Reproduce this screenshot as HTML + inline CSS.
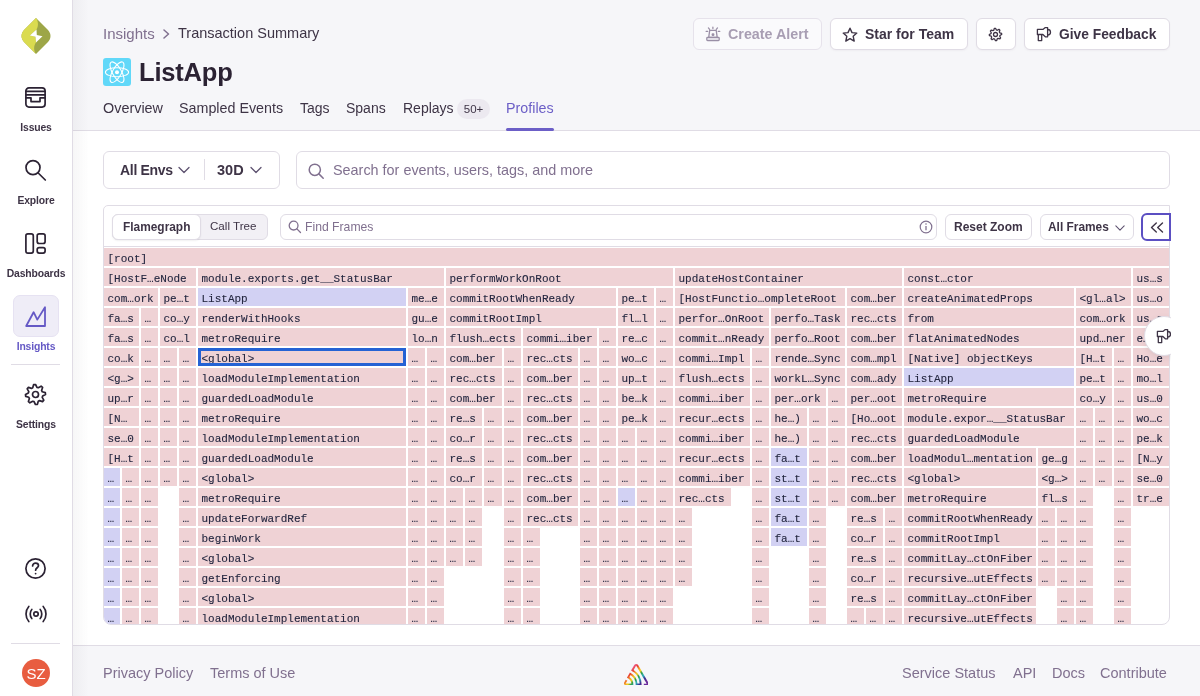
<!DOCTYPE html><html><head><meta charset="utf-8"><style>
*{box-sizing:border-box;margin:0;padding:0}
html,body{width:1200px;height:696px;overflow:hidden;background:#fff;font-family:"Liberation Sans",sans-serif;color:#3E3446}
.a{position:absolute}
.t{position:absolute;white-space:nowrap;line-height:1}
.btn{position:absolute;border:1px solid #E0DCE5;border-radius:6px;background:#fff;box-shadow:0 1px 2px rgba(43,34,51,0.04)}
.fg{position:absolute;font-family:"Liberation Mono",monospace;font-size:11px;line-height:23px;color:#23263F;white-space:nowrap;overflow:hidden;height:18px;padding-left:3.5px;-webkit-text-stroke:0.1px #23263F}
.p{background:#EFD2D5}
.v{background:#D2D1F3}
</style></head><body><div style="position:absolute;left:0;top:0;width:1200px;height:696px;will-change:transform">
<div class="a" style="left:0;top:0;width:73px;height:696px;background:#fff;border-right:1px solid #E0DCE5"></div>
<svg class="a" style="left:21px;top:18px" width="30" height="36" viewBox="0 0 30 36">
<path d="M15 0 L26.5 11.5 C30.5 15.5 30.5 20.5 26.5 24.5 L15 36 L3.5 24.5 C-0.5 20.5 -0.5 15.5 3.5 11.5 Z" fill="#9DA647"/>
<path d="M15 0 C17.5 3 17.5 8.5 15.5 11.5 L8.8 17.5 L14.5 18.8 L15 24.5 C12.5 27.5 12.5 33 15 36 L3.5 24.5 C-0.5 20.5 -0.5 15.5 3.5 11.5 Z" fill="#DADB50"/>
<path d="M15.5 11.5 L8.8 17.5 L14.5 18.8 L15 24.5 L21.5 18.2 L15.8 17 Z" fill="#fff"/>
</svg>
<svg class="a" style="left:25px;top:87px" width="21" height="21" viewBox="0 0 21 21"><rect x="0.9" y="0.9" width="19.2" height="19.2" rx="3" fill="none" stroke="#2B2233" stroke-width="1.7" stroke-linecap="round" stroke-linejoin="round"/>
<path d="M1 4.3 H20 M1 7.8 H20 M1 10.8 H6 V14.6 H15 V10.8 H20" fill="none" stroke="#2B2233" stroke-width="1.7" stroke-linecap="round" stroke-linejoin="round"/></svg>
<svg class="a" style="left:24px;top:159px" width="23" height="23" viewBox="0 0 23 23"><circle cx="9" cy="8.6" r="7" fill="none" stroke="#2B2233" stroke-width="1.7" stroke-linecap="round" stroke-linejoin="round"/><path d="M14.2 14 L21.3 21" fill="none" stroke="#2B2233" stroke-width="1.7" stroke-linecap="round" stroke-linejoin="round"/></svg>
<svg class="a" style="left:25px;top:233px" width="21" height="21" viewBox="0 0 21 21"><rect x="0.9" y="0.9" width="7.4" height="19.2" rx="2" fill="none" stroke="#2B2233" stroke-width="1.7" stroke-linecap="round" stroke-linejoin="round"/><rect x="12.2" y="0.9" width="7.9" height="9.6" rx="2" fill="none" stroke="#2B2233" stroke-width="1.7" stroke-linecap="round" stroke-linejoin="round"/><rect x="12.2" y="14.6" width="7.9" height="5.5" rx="2" fill="none" stroke="#2B2233" stroke-width="1.7" stroke-linecap="round" stroke-linejoin="round"/></svg>
<div class="a" style="left:13px;top:295px;width:46px;height:42px;border-radius:7px;background:#EFEDF7;border:1px solid #E6E2F2"></div>
<svg class="a" style="left:25px;top:306px" width="21" height="21" viewBox="0 0 21 21"><path d="M1.2 20 L8.6 6.2 L12.3 13.6 L20 1.2 V20 Z" fill="none" stroke="#6559C5" stroke-width="1.8" stroke-linejoin="round"/></svg>
<div class="t" style="left:0;width:72px;text-align:center;top:122px;font-size:10.4px;font-weight:bold;letter-spacing:-0.15px;color:#3E3446;line-height:12px">Issues</div>
<div class="t" style="left:0;width:72px;text-align:center;top:195px;font-size:10.4px;font-weight:bold;letter-spacing:-0.15px;color:#3E3446;line-height:12px">Explore</div>
<div class="t" style="left:0;width:72px;text-align:center;top:268px;font-size:10.4px;font-weight:bold;letter-spacing:-0.15px;color:#3E3446;line-height:12px">Dashboards</div>
<div class="t" style="left:0;width:72px;text-align:center;top:341px;font-size:10.4px;font-weight:bold;letter-spacing:-0.15px;color:#6559C5;line-height:12px">Insights</div>
<div class="a" style="left:11px;top:364px;width:49px;height:1px;background:#E0DCE5"></div>
<svg class="a" style="left:24px;top:383px" width="23" height="23" viewBox="0 0 23 23"><path d="M21.31 9.58 L21.50 11.54 L18.65 12.95 L18.23 14.32 L19.79 17.09 L18.55 18.60 L15.53 17.58 L14.27 18.25 L13.42 21.31 L11.46 21.50 L10.05 18.65 L8.68 18.23 L5.91 19.79 L4.40 18.55 L5.42 15.53 L4.75 14.27 L1.69 13.42 L1.50 11.46 L4.35 10.05 L4.77 8.68 L3.21 5.91 L4.45 4.40 L7.47 5.42 L8.73 4.75 L9.58 1.69 L11.54 1.50 L12.95 4.35 L14.32 4.77 L17.09 3.21 L18.60 4.45 L17.58 7.47 L18.25 8.73 Z" fill="none" stroke="#2B2233" stroke-width="1.7" stroke-linecap="round" stroke-linejoin="round" stroke-width="1.6"/><circle cx="11.5" cy="11.5" r="3" fill="none" stroke="#2B2233" stroke-width="1.7" stroke-linecap="round" stroke-linejoin="round" stroke-width="1.6"/></svg>
<div class="t" style="left:0;width:72px;text-align:center;top:419px;font-size:10.4px;font-weight:bold;letter-spacing:-0.15px;color:#3E3446;line-height:12px">Settings</div>
<svg class="a" style="left:24px;top:557px" width="23" height="23" viewBox="0 0 23 23"><circle cx="11.5" cy="11.5" r="9.6" fill="none" stroke="#2B2233" stroke-width="1.7" stroke-linecap="round" stroke-linejoin="round"/><path d="M8.6 9 C8.6 7.2 10 6.2 11.6 6.2 C13.3 6.2 14.5 7.3 14.5 8.8 C14.5 10.6 11.6 11 11.6 13.2" fill="none" stroke="#2B2233" stroke-width="1.7" stroke-linecap="round" stroke-linejoin="round"/><circle cx="11.6" cy="16.6" r="0.9" fill="#2B2233"/></svg>
<svg class="a" style="left:24.5px;top:604px" width="22" height="20" viewBox="0.5 1 22 20"><circle cx="11.5" cy="11" r="2.2" fill="none" stroke="#2B2233" stroke-width="1.7" stroke-linecap="round" stroke-linejoin="round"/><path d="M7.3 6.5 C5.2 8.8 5.2 13.2 7.3 15.5 M15.7 6.5 C17.8 8.8 17.8 13.2 15.7 15.5 M4.3 3.5 C0.6 7.6 0.6 14.4 4.3 18.5 M18.7 3.5 C22.4 7.6 22.4 14.4 18.7 18.5" fill="none" stroke="#2B2233" stroke-width="1.7" stroke-linecap="round" stroke-linejoin="round"/></svg>
<div class="a" style="left:11px;top:643px;width:49px;height:1px;background:#E0DCE5"></div>
<div class="a" style="left:22px;top:659px;width:28px;height:28px;border-radius:50%;background:#E85D40;color:#fff;font-size:15px;line-height:30px;text-align:center">SZ</div>
<div class="a" style="left:73px;top:0;width:16px;height:696px;background:linear-gradient(to right,rgba(43,34,51,0.04),rgba(43,34,51,0));z-index:5"></div>
<div class="a" style="left:73px;top:0;width:1127px;height:131px;background:#F6F6F9;border-bottom:1px solid #E0DCE5"></div>
<div class="t" style="left:103px;top:26px;font-size:15px;color:#80708F">Insights</div>
<svg class="a" style="left:162px;top:29px" width="9" height="12" viewBox="0 0 9 12"><path d="M2 1 L6.5 5 L2 9" fill="none" stroke="#80708F" stroke-width="1.5" stroke-linecap="round" stroke-linejoin="round"/></svg>
<div class="t" style="left:178px;top:26px;font-size:14.5px;color:#3E3446">Transaction Summary</div>
<svg class="a" style="left:103px;top:58px" width="28" height="28" viewBox="0 0 28 28"><rect width="28" height="28" rx="3" fill="#61D8F9"/>
<g fill="none" stroke="#fff" stroke-width="1.05"><ellipse cx="14" cy="14.2" rx="11.6" ry="4.5"/><ellipse cx="14" cy="14.2" rx="11.6" ry="4.5" transform="rotate(60 14 14.2)"/><ellipse cx="14" cy="14.2" rx="11.6" ry="4.5" transform="rotate(120 14 14.2)"/></g><circle cx="14" cy="14.2" r="2" fill="#fff"/></svg>
<div class="t" style="left:139px;top:60px;font-size:25.5px;font-weight:bold;color:#2B2233;letter-spacing:-0.2px">ListApp</div>
<div class="t" style="left:103px;top:101px;font-size:14.4px;color:#3E3446">Overview</div>
<div class="t" style="left:179px;top:101px;font-size:14.3px;color:#3E3446">Sampled Events</div>
<div class="t" style="left:300px;top:101px;font-size:14px;color:#3E3446">Tags</div>
<div class="t" style="left:346px;top:101px;font-size:14px;color:#3E3446">Spans</div>
<div class="t" style="left:403px;top:101px;font-size:14px;color:#3E3446">Replays</div>
<div class="a" style="left:457px;top:99px;width:33px;height:20px;border-radius:10px;background:#ECE9F0;font-size:11.5px;line-height:20px;text-align:center;color:#3E3446">50+</div>
<div class="t" style="left:506px;top:101px;font-size:14.3px;color:#6C5FC7">Profiles</div>
<div class="a" style="left:506px;top:128px;width:48px;height:3px;border-radius:2px;background:#6C5FC7"></div>
<div class="btn" style="left:693px;top:18px;width:129px;height:32px;background:#FAFAFC;box-shadow:none;border-color:#E6E2EB"></div>
<svg class="a" style="left:704px;top:24px" width="18" height="18" viewBox="0 0 18 18"><g fill="none" stroke="#9A8FA6" stroke-width="1.3" stroke-linecap="round" stroke-linejoin="round"><path d="M8.9 3.2 V4.6 M4.4 3.9 L5.6 5.3 M13.5 3.9 L12.3 5.3 M2.1 7.3 H3.7 M14.2 7.3 H15.8"/><path d="M5.7 6.4 H12.2 L13.2 13.3 H4.7 Z"/><rect x="2.8" y="13.5" width="12.4" height="3" rx="0.8"/></g><rect x="7.6" y="9.3" width="2.8" height="2.8" rx="1" fill="#9A8FA6"/></svg>
<div class="t" style="left:728px;top:27px;font-size:14.3px;font-weight:bold;color:#A89EB3">Create Alert</div>
<div class="btn" style="left:830px;top:18px;width:138px;height:32px;"></div>
<svg class="a" style="left:842px;top:26.7px" width="16" height="16" viewBox="0 0 16 16"><path d="M8 1.2 L10 5.6 L14.8 6.1 L11.2 9.3 L12.2 14.1 L8 11.7 L3.8 14.1 L4.8 9.3 L1.2 6.1 L6 5.6 Z" fill="none" stroke="#3E3446" stroke-width="1.4" stroke-linejoin="round"/></svg>
<div class="t" style="left:865px;top:27px;font-size:14px;font-weight:bold;color:#3E3446">Star for Team</div>
<div class="btn" style="left:976px;top:18px;width:40px;height:32px;"></div>
<svg class="a" style="left:988px;top:27px" width="15" height="15" viewBox="0 0 15 15"><path d="M13.59 6.31 L13.70 7.52 L12.01 8.41 L11.74 9.28 L12.64 10.96 L11.87 11.90 L10.04 11.33 L9.24 11.76 L8.69 13.59 L7.48 13.70 L6.59 12.01 L5.72 11.74 L4.04 12.64 L3.10 11.87 L3.67 10.04 L3.24 9.24 L1.41 8.69 L1.30 7.48 L2.99 6.59 L3.26 5.72 L2.36 4.04 L3.13 3.10 L4.96 3.67 L5.76 3.24 L6.31 1.41 L7.52 1.30 L8.41 2.99 L9.28 3.26 L10.96 2.36 L11.90 3.13 L11.33 4.96 L11.76 5.76 Z" fill="none" stroke="#3E3446" stroke-width="1.3" stroke-linejoin="round"/><circle cx="7.5" cy="7.5" r="2" fill="none" stroke="#3E3446" stroke-width="1.3"/></svg>
<div class="btn" style="left:1024px;top:18px;width:146px;height:32px;"></div>
<svg class="a" style="left:1036px;top:26px" width="16" height="16" viewBox="0 0 16 16"><g fill="none" stroke="#3E3446" stroke-width="1.3" stroke-linejoin="round"><path d="M1.4 3.4 H6.9 L9.3 1.6 H11.6 V10.8 H9.3 L6.9 8.5 H1.4 Z"/><path d="M2.3 8.5 V14.6 H5.7 V8.5"/><path d="M11.6 3.5 A2.9 2.8 0 0 1 11.6 9.1"/></g></svg>
<div class="t" style="left:1059px;top:28px;font-size:13.8px;font-weight:bold;color:#3E3446">Give Feedback</div>
<div class="btn" style="left:103px;top:151px;width:177px;height:38px;box-shadow:none"></div>
<div class="t" style="left:120px;top:163px;font-size:14px;font-weight:bold;color:#3E3446;letter-spacing:-0.3px">All Envs</div>
<svg class="a" style="left:178px;top:166px" width="12" height="8" viewBox="0 0 12 8"><path d="M1 1.5 L6 6.5 L11 1.5" fill="none" stroke="#5E5270" stroke-width="1.3" stroke-linecap="round" stroke-linejoin="round"/></svg>
<div class="a" style="left:204px;top:159px;width:1px;height:21px;background:#E0DCE5"></div>
<div class="t" style="left:217px;top:163px;font-size:14.5px;font-weight:bold;color:#3E3446">30D</div>
<svg class="a" style="left:250px;top:166px" width="12" height="8" viewBox="0 0 12 8"><path d="M1 1.5 L6 6.5 L11 1.5" fill="none" stroke="#5E5270" stroke-width="1.3" stroke-linecap="round" stroke-linejoin="round"/></svg>
<div class="btn" style="left:296px;top:151px;width:874px;height:38px;box-shadow:none"></div>
<svg class="a" style="left:308px;top:163px" width="17" height="17" viewBox="0 0 17 17"><circle cx="6.8" cy="6.8" r="5.6" fill="none" stroke="#80708F" stroke-width="1.5"/><path d="M10.9 10.9 L15.2 15.2" stroke="#80708F" stroke-width="1.5" stroke-linecap="round"/></svg>
<div class="t" style="left:333px;top:163px;font-size:14.4px;color:#80708F">Search for events, users, tags, and more</div>
<div class="a" style="left:103px;top:205px;width:1067px;height:420px;border:1px solid #E0DCE5;border-radius:5px 0 8px 8px;background:#fff;overflow:hidden"></div>
<div class="a" style="left:112px;top:214px;width:156px;height:26px;border-radius:6px;background:#F2F0F5;border:1px solid #E0DCE5"></div>
<div class="a" style="left:112px;top:214px;width:89px;height:26px;border-radius:6px;background:#fff;border:1px solid #E0DCE5;box-shadow:0 1px 2px rgba(0,0,0,0.06)"></div>
<div class="t" style="left:123px;top:222px;font-size:11.9px;font-weight:bold;color:#3E3446">Flamegraph</div>
<div class="t" style="left:210px;top:219.5px;font-size:11.6px;color:#3E3446">Call Tree</div>
<div class="btn" style="left:280px;top:214px;width:657px;height:26px;box-shadow:none"></div>
<svg class="a" style="left:288px;top:220px" width="14" height="14" viewBox="0 0 14 14"><circle cx="5.6" cy="5.6" r="4.4" fill="none" stroke="#80708F" stroke-width="1.3"/><path d="M8.9 8.9 L12.5 12.5" stroke="#80708F" stroke-width="1.3" stroke-linecap="round"/></svg>
<div class="t" style="left:305px;top:221px;font-size:12.2px;color:#80708F">Find Frames</div>
<svg class="a" style="left:919px;top:220px" width="14" height="14" viewBox="0 0 14 14"><circle cx="7" cy="7" r="5.8" fill="none" stroke="#80708F" stroke-width="1.2"/><path d="M7 6 V10.3" stroke="#80708F" stroke-width="1.3"/><circle cx="7" cy="4" r="0.8" fill="#80708F"/></svg>
<div class="btn" style="left:945px;top:214px;width:87px;height:26px;box-shadow:none"></div>
<div class="t" style="left:954px;top:221px;font-size:12px;font-weight:bold;color:#3E3446">Reset Zoom</div>
<div class="btn" style="left:1040px;top:214px;width:94px;height:26px;box-shadow:none"></div>
<div class="t" style="left:1048px;top:222px;font-size:11.9px;font-weight:bold;color:#3E3446">All Frames</div>
<svg class="a" style="left:1115px;top:224px" width="10" height="8" viewBox="0 0 12 8"><path d="M1 1.5 L6 6.5 L11 1.5" fill="none" stroke="#5E5270" stroke-width="1.3" stroke-linecap="round" stroke-linejoin="round"/></svg>
<div class="a" style="left:1141px;top:213px;width:30px;height:28px;border-radius:6px 0 0 6px;border:2px solid #5B4FC2;background:#fff;z-index:2"></div>
<svg class="a" style="left:1150px;top:221.5px;z-index:3" width="14" height="11" viewBox="0 0 14 11"><path d="M6.3 1 L1.5 5.5 L6.3 10 M12.5 1 L7.7 5.5 L12.5 10" fill="none" stroke="#3E3446" stroke-width="1.4" stroke-linecap="round" stroke-linejoin="round"/></svg>
<div class="a" style="left:1171px;top:205px;width:29px;height:440px;background:#fff;z-index:4"></div>
<div class="a" style="left:104px;top:246px;width:1066px;height:1px;background:#E0DCE5"></div>
<div class="a" style="left:104px;top:248px;width:1065px;height:376px;overflow:hidden;border-radius:0 0 7px 7px;will-change:transform">
<div class="fg p" style="left:0px;top:0px;width:1065px">[root]</div>
<div class="fg p" style="left:0px;top:20px;width:92px">[HostF…eNode</div>
<div class="fg p" style="left:94px;top:20px;width:246px">module.exports.get__StatusBar</div>
<div class="fg p" style="left:342px;top:20px;width:227px">performWorkOnRoot</div>
<div class="fg p" style="left:571px;top:20px;width:227px">updateHostContainer</div>
<div class="fg p" style="left:800px;top:20px;width:227px">const…ctor</div>
<div class="fg p" style="left:1029px;top:20px;width:36px">us…s</div>
<div class="fg p" style="left:0px;top:40px;width:54px">com…ork</div>
<div class="fg p" style="left:56px;top:40px;width:36px">pe…t</div>
<div class="fg v" style="left:94px;top:40px;width:208px">ListApp</div>
<div class="fg p" style="left:304px;top:40px;width:36px">me…e</div>
<div class="fg p" style="left:342px;top:40px;width:170px">commitRootWhenReady</div>
<div class="fg p" style="left:514px;top:40px;width:36px">pe…t</div>
<div class="fg p" style="left:552px;top:40px;width:17px">…</div>
<div class="fg p" style="left:571px;top:40px;width:170px">[HostFunctio…ompleteRoot</div>
<div class="fg p" style="left:743px;top:40px;width:55px">com…ber</div>
<div class="fg p" style="left:800px;top:40px;width:170px">createAnimatedProps</div>
<div class="fg p" style="left:972px;top:40px;width:55px">&lt;gl…al&gt;</div>
<div class="fg p" style="left:1029px;top:40px;width:36px">us…o</div>
<div class="fg p" style="left:0px;top:60px;width:35px">fa…s</div>
<div class="fg p" style="left:37px;top:60px;width:17px">…</div>
<div class="fg p" style="left:56px;top:60px;width:36px">co…y</div>
<div class="fg p" style="left:94px;top:60px;width:208px">renderWithHooks</div>
<div class="fg p" style="left:304px;top:60px;width:36px">gu…e</div>
<div class="fg p" style="left:342px;top:60px;width:170px">commitRootImpl</div>
<div class="fg p" style="left:514px;top:60px;width:36px">fl…l</div>
<div class="fg p" style="left:552px;top:60px;width:17px">…</div>
<div class="fg p" style="left:571px;top:60px;width:94px">perfor…OnRoot</div>
<div class="fg p" style="left:667px;top:60px;width:74px">perfo…Task</div>
<div class="fg p" style="left:743px;top:60px;width:55px">rec…cts</div>
<div class="fg p" style="left:800px;top:60px;width:170px">from</div>
<div class="fg p" style="left:972px;top:60px;width:55px">com…ork</div>
<div class="fg p" style="left:1029px;top:60px;width:36px">us…o</div>
<div class="fg p" style="left:0px;top:80px;width:35px">fa…s</div>
<div class="fg p" style="left:37px;top:80px;width:17px">…</div>
<div class="fg p" style="left:56px;top:80px;width:36px">co…l</div>
<div class="fg p" style="left:94px;top:80px;width:208px">metroRequire</div>
<div class="fg p" style="left:304px;top:80px;width:36px">lo…n</div>
<div class="fg p" style="left:342px;top:80px;width:75px">flush…ects</div>
<div class="fg p" style="left:419px;top:80px;width:74px">commi…iber</div>
<div class="fg p" style="left:495px;top:80px;width:17px">…</div>
<div class="fg p" style="left:514px;top:80px;width:36px">re…c</div>
<div class="fg p" style="left:552px;top:80px;width:17px">…</div>
<div class="fg p" style="left:571px;top:80px;width:94px">commit…nReady</div>
<div class="fg p" style="left:667px;top:80px;width:74px">perfo…Root</div>
<div class="fg p" style="left:743px;top:80px;width:55px">com…ber</div>
<div class="fg p" style="left:800px;top:80px;width:170px">flatAnimatedNodes</div>
<div class="fg p" style="left:972px;top:80px;width:55px">upd…ner</div>
<div class="fg p" style="left:1029px;top:80px;width:36px">e…s</div>
<div class="fg p" style="left:0px;top:100px;width:35px">co…k</div>
<div class="fg p" style="left:37px;top:100px;width:17px">…</div>
<div class="fg p" style="left:56px;top:100px;width:17px">…</div>
<div class="fg p" style="left:75px;top:100px;width:17px">…</div>
<div class="fg p" style="left:94px;top:100px;width:208px">&lt;global&gt;</div>
<div class="fg p" style="left:304px;top:100px;width:17px">…</div>
<div class="fg p" style="left:323px;top:100px;width:17px">…</div>
<div class="fg p" style="left:342px;top:100px;width:56px">com…ber</div>
<div class="fg p" style="left:400px;top:100px;width:17px">…</div>
<div class="fg p" style="left:419px;top:100px;width:55px">rec…cts</div>
<div class="fg p" style="left:476px;top:100px;width:17px">…</div>
<div class="fg p" style="left:495px;top:100px;width:17px">…</div>
<div class="fg p" style="left:514px;top:100px;width:36px">wo…c</div>
<div class="fg p" style="left:552px;top:100px;width:17px">…</div>
<div class="fg p" style="left:571px;top:100px;width:75px">commi…Impl</div>
<div class="fg p" style="left:648px;top:100px;width:17px">…</div>
<div class="fg p" style="left:667px;top:100px;width:74px">rende…Sync</div>
<div class="fg p" style="left:743px;top:100px;width:55px">com…mpl</div>
<div class="fg p" style="left:800px;top:100px;width:170px">[Native] objectKeys</div>
<div class="fg p" style="left:972px;top:100px;width:36px">[H…t</div>
<div class="fg p" style="left:1010px;top:100px;width:17px">…</div>
<div class="fg p" style="left:1029px;top:100px;width:36px">Ho…e</div>
<div class="fg p" style="left:0px;top:120px;width:35px">&lt;g…&gt;</div>
<div class="fg p" style="left:37px;top:120px;width:17px">…</div>
<div class="fg p" style="left:56px;top:120px;width:17px">…</div>
<div class="fg p" style="left:75px;top:120px;width:17px">…</div>
<div class="fg p" style="left:94px;top:120px;width:208px">loadModuleImplementation</div>
<div class="fg p" style="left:304px;top:120px;width:17px">…</div>
<div class="fg p" style="left:323px;top:120px;width:17px">…</div>
<div class="fg p" style="left:342px;top:120px;width:56px">rec…cts</div>
<div class="fg p" style="left:400px;top:120px;width:17px">…</div>
<div class="fg p" style="left:419px;top:120px;width:55px">com…ber</div>
<div class="fg p" style="left:476px;top:120px;width:17px">…</div>
<div class="fg p" style="left:495px;top:120px;width:17px">…</div>
<div class="fg p" style="left:514px;top:120px;width:36px">up…t</div>
<div class="fg p" style="left:552px;top:120px;width:17px">…</div>
<div class="fg p" style="left:571px;top:120px;width:75px">flush…ects</div>
<div class="fg p" style="left:648px;top:120px;width:17px">…</div>
<div class="fg p" style="left:667px;top:120px;width:74px">workL…Sync</div>
<div class="fg p" style="left:743px;top:120px;width:55px">com…ady</div>
<div class="fg v" style="left:800px;top:120px;width:170px">ListApp</div>
<div class="fg p" style="left:972px;top:120px;width:36px">pe…t</div>
<div class="fg p" style="left:1010px;top:120px;width:17px">…</div>
<div class="fg p" style="left:1029px;top:120px;width:36px">mo…l</div>
<div class="fg p" style="left:0px;top:140px;width:35px">up…r</div>
<div class="fg p" style="left:37px;top:140px;width:17px">…</div>
<div class="fg p" style="left:56px;top:140px;width:17px">…</div>
<div class="fg p" style="left:75px;top:140px;width:17px">…</div>
<div class="fg p" style="left:94px;top:140px;width:208px">guardedLoadModule</div>
<div class="fg p" style="left:304px;top:140px;width:17px">…</div>
<div class="fg p" style="left:323px;top:140px;width:17px">…</div>
<div class="fg p" style="left:342px;top:140px;width:56px">com…ber</div>
<div class="fg p" style="left:400px;top:140px;width:17px">…</div>
<div class="fg p" style="left:419px;top:140px;width:55px">rec…cts</div>
<div class="fg p" style="left:476px;top:140px;width:17px">…</div>
<div class="fg p" style="left:495px;top:140px;width:17px">…</div>
<div class="fg p" style="left:514px;top:140px;width:36px">be…k</div>
<div class="fg p" style="left:552px;top:140px;width:17px">…</div>
<div class="fg p" style="left:571px;top:140px;width:75px">commi…iber</div>
<div class="fg p" style="left:648px;top:140px;width:17px">…</div>
<div class="fg p" style="left:667px;top:140px;width:55px">per…ork</div>
<div class="fg p" style="left:724px;top:140px;width:17px">…</div>
<div class="fg p" style="left:743px;top:140px;width:55px">per…oot</div>
<div class="fg p" style="left:800px;top:140px;width:170px">metroRequire</div>
<div class="fg p" style="left:972px;top:140px;width:36px">co…y</div>
<div class="fg p" style="left:1010px;top:140px;width:17px">…</div>
<div class="fg p" style="left:1029px;top:140px;width:36px">us…0</div>
<div class="fg p" style="left:0px;top:160px;width:35px">[N…</div>
<div class="fg p" style="left:37px;top:160px;width:17px">…</div>
<div class="fg p" style="left:56px;top:160px;width:17px">…</div>
<div class="fg p" style="left:75px;top:160px;width:17px">…</div>
<div class="fg p" style="left:94px;top:160px;width:208px">metroRequire</div>
<div class="fg p" style="left:304px;top:160px;width:17px">…</div>
<div class="fg p" style="left:323px;top:160px;width:17px">…</div>
<div class="fg p" style="left:342px;top:160px;width:36px">re…s</div>
<div class="fg p" style="left:380px;top:160px;width:18px">…</div>
<div class="fg p" style="left:400px;top:160px;width:17px">…</div>
<div class="fg p" style="left:419px;top:160px;width:55px">com…ber</div>
<div class="fg p" style="left:476px;top:160px;width:17px">…</div>
<div class="fg p" style="left:495px;top:160px;width:17px">…</div>
<div class="fg p" style="left:514px;top:160px;width:36px">pe…k</div>
<div class="fg p" style="left:552px;top:160px;width:17px">…</div>
<div class="fg p" style="left:571px;top:160px;width:75px">recur…ects</div>
<div class="fg p" style="left:648px;top:160px;width:17px">…</div>
<div class="fg p" style="left:667px;top:160px;width:36px">he…)</div>
<div class="fg p" style="left:705px;top:160px;width:17px">…</div>
<div class="fg p" style="left:724px;top:160px;width:17px">…</div>
<div class="fg p" style="left:743px;top:160px;width:55px">[Ho…oot</div>
<div class="fg p" style="left:800px;top:160px;width:170px">module.expor…__StatusBar</div>
<div class="fg p" style="left:972px;top:160px;width:17px">…</div>
<div class="fg p" style="left:991px;top:160px;width:17px">…</div>
<div class="fg p" style="left:1010px;top:160px;width:17px">…</div>
<div class="fg p" style="left:1029px;top:160px;width:36px">wo…c</div>
<div class="fg p" style="left:0px;top:180px;width:35px">se…0</div>
<div class="fg p" style="left:37px;top:180px;width:17px">…</div>
<div class="fg p" style="left:56px;top:180px;width:17px">…</div>
<div class="fg p" style="left:75px;top:180px;width:17px">…</div>
<div class="fg p" style="left:94px;top:180px;width:208px">loadModuleImplementation</div>
<div class="fg p" style="left:304px;top:180px;width:17px">…</div>
<div class="fg p" style="left:323px;top:180px;width:17px">…</div>
<div class="fg p" style="left:342px;top:180px;width:36px">co…r</div>
<div class="fg p" style="left:380px;top:180px;width:18px">…</div>
<div class="fg p" style="left:400px;top:180px;width:17px">…</div>
<div class="fg p" style="left:419px;top:180px;width:55px">rec…cts</div>
<div class="fg p" style="left:476px;top:180px;width:17px">…</div>
<div class="fg p" style="left:495px;top:180px;width:17px">…</div>
<div class="fg p" style="left:514px;top:180px;width:17px">…</div>
<div class="fg p" style="left:533px;top:180px;width:17px">…</div>
<div class="fg p" style="left:552px;top:180px;width:17px">…</div>
<div class="fg p" style="left:571px;top:180px;width:75px">commi…iber</div>
<div class="fg p" style="left:648px;top:180px;width:17px">…</div>
<div class="fg p" style="left:667px;top:180px;width:36px">he…)</div>
<div class="fg p" style="left:705px;top:180px;width:17px">…</div>
<div class="fg p" style="left:724px;top:180px;width:17px">…</div>
<div class="fg p" style="left:743px;top:180px;width:55px">rec…cts</div>
<div class="fg p" style="left:800px;top:180px;width:170px">guardedLoadModule</div>
<div class="fg p" style="left:972px;top:180px;width:17px">…</div>
<div class="fg p" style="left:991px;top:180px;width:17px">…</div>
<div class="fg p" style="left:1010px;top:180px;width:17px">…</div>
<div class="fg p" style="left:1029px;top:180px;width:36px">pe…k</div>
<div class="fg p" style="left:0px;top:200px;width:35px">[H…t</div>
<div class="fg p" style="left:37px;top:200px;width:17px">…</div>
<div class="fg p" style="left:56px;top:200px;width:17px">…</div>
<div class="fg p" style="left:75px;top:200px;width:17px">…</div>
<div class="fg p" style="left:94px;top:200px;width:208px">guardedLoadModule</div>
<div class="fg p" style="left:304px;top:200px;width:17px">…</div>
<div class="fg p" style="left:323px;top:200px;width:17px">…</div>
<div class="fg p" style="left:342px;top:200px;width:36px">re…s</div>
<div class="fg p" style="left:380px;top:200px;width:18px">…</div>
<div class="fg p" style="left:400px;top:200px;width:17px">…</div>
<div class="fg p" style="left:419px;top:200px;width:55px">com…ber</div>
<div class="fg p" style="left:476px;top:200px;width:17px">…</div>
<div class="fg p" style="left:495px;top:200px;width:17px">…</div>
<div class="fg p" style="left:514px;top:200px;width:17px">…</div>
<div class="fg p" style="left:533px;top:200px;width:17px">…</div>
<div class="fg p" style="left:552px;top:200px;width:17px">…</div>
<div class="fg p" style="left:571px;top:200px;width:75px">recur…ects</div>
<div class="fg p" style="left:648px;top:200px;width:17px">…</div>
<div class="fg v" style="left:667px;top:200px;width:36px">fa…t</div>
<div class="fg p" style="left:705px;top:200px;width:17px">…</div>
<div class="fg p" style="left:724px;top:200px;width:17px">…</div>
<div class="fg p" style="left:743px;top:200px;width:55px">com…ber</div>
<div class="fg p" style="left:800px;top:200px;width:132px">loadModul…mentation</div>
<div class="fg p" style="left:934px;top:200px;width:36px">ge…g</div>
<div class="fg p" style="left:972px;top:200px;width:17px">…</div>
<div class="fg p" style="left:991px;top:200px;width:17px">…</div>
<div class="fg p" style="left:1010px;top:200px;width:17px">…</div>
<div class="fg p" style="left:1029px;top:200px;width:36px">[N…y</div>
<div class="fg v" style="left:0px;top:220px;width:16px">…</div>
<div class="fg p" style="left:18px;top:220px;width:17px">…</div>
<div class="fg p" style="left:37px;top:220px;width:17px">…</div>
<div class="fg p" style="left:56px;top:220px;width:17px">…</div>
<div class="fg p" style="left:75px;top:220px;width:17px">…</div>
<div class="fg p" style="left:94px;top:220px;width:208px">&lt;global&gt;</div>
<div class="fg p" style="left:304px;top:220px;width:17px">…</div>
<div class="fg p" style="left:323px;top:220px;width:17px">…</div>
<div class="fg p" style="left:342px;top:220px;width:36px">co…r</div>
<div class="fg p" style="left:380px;top:220px;width:18px">…</div>
<div class="fg p" style="left:400px;top:220px;width:17px">…</div>
<div class="fg p" style="left:419px;top:220px;width:55px">rec…cts</div>
<div class="fg p" style="left:476px;top:220px;width:17px">…</div>
<div class="fg p" style="left:495px;top:220px;width:17px">…</div>
<div class="fg p" style="left:514px;top:220px;width:17px">…</div>
<div class="fg p" style="left:533px;top:220px;width:17px">…</div>
<div class="fg p" style="left:552px;top:220px;width:17px">…</div>
<div class="fg p" style="left:571px;top:220px;width:75px">commi…iber</div>
<div class="fg p" style="left:648px;top:220px;width:17px">…</div>
<div class="fg v" style="left:667px;top:220px;width:36px">st…t</div>
<div class="fg p" style="left:705px;top:220px;width:17px">…</div>
<div class="fg p" style="left:724px;top:220px;width:17px">…</div>
<div class="fg p" style="left:743px;top:220px;width:55px">rec…cts</div>
<div class="fg p" style="left:800px;top:220px;width:132px">&lt;global&gt;</div>
<div class="fg p" style="left:934px;top:220px;width:36px">&lt;g…&gt;</div>
<div class="fg p" style="left:972px;top:220px;width:17px">…</div>
<div class="fg p" style="left:991px;top:220px;width:17px">…</div>
<div class="fg p" style="left:1010px;top:220px;width:17px">…</div>
<div class="fg p" style="left:1029px;top:220px;width:36px">se…0</div>
<div class="fg v" style="left:0px;top:240px;width:16px">…</div>
<div class="fg p" style="left:18px;top:240px;width:17px">…</div>
<div class="fg p" style="left:37px;top:240px;width:17px">…</div>
<div class="fg p" style="left:75px;top:240px;width:17px">…</div>
<div class="fg p" style="left:94px;top:240px;width:208px">metroRequire</div>
<div class="fg p" style="left:304px;top:240px;width:17px">…</div>
<div class="fg p" style="left:323px;top:240px;width:17px">…</div>
<div class="fg p" style="left:342px;top:240px;width:17px">…</div>
<div class="fg p" style="left:361px;top:240px;width:17px">…</div>
<div class="fg p" style="left:380px;top:240px;width:18px">…</div>
<div class="fg p" style="left:400px;top:240px;width:17px">…</div>
<div class="fg p" style="left:419px;top:240px;width:55px">com…ber</div>
<div class="fg p" style="left:476px;top:240px;width:17px">…</div>
<div class="fg p" style="left:495px;top:240px;width:17px">…</div>
<div class="fg v" style="left:514px;top:240px;width:17px">…</div>
<div class="fg p" style="left:533px;top:240px;width:17px">…</div>
<div class="fg p" style="left:552px;top:240px;width:17px">…</div>
<div class="fg p" style="left:571px;top:240px;width:56px">rec…cts</div>
<div class="fg p" style="left:648px;top:240px;width:17px">…</div>
<div class="fg v" style="left:667px;top:240px;width:36px">st…t</div>
<div class="fg p" style="left:705px;top:240px;width:17px">…</div>
<div class="fg p" style="left:724px;top:240px;width:17px">…</div>
<div class="fg p" style="left:743px;top:240px;width:55px">com…ber</div>
<div class="fg p" style="left:800px;top:240px;width:132px">metroRequire</div>
<div class="fg p" style="left:934px;top:240px;width:36px">fl…s</div>
<div class="fg p" style="left:972px;top:240px;width:17px">…</div>
<div class="fg p" style="left:1010px;top:240px;width:17px">…</div>
<div class="fg p" style="left:1029px;top:240px;width:36px">tr…e</div>
<div class="fg v" style="left:0px;top:260px;width:16px">…</div>
<div class="fg p" style="left:18px;top:260px;width:17px">…</div>
<div class="fg p" style="left:37px;top:260px;width:17px">…</div>
<div class="fg p" style="left:75px;top:260px;width:17px">…</div>
<div class="fg p" style="left:94px;top:260px;width:208px">updateForwardRef</div>
<div class="fg p" style="left:304px;top:260px;width:17px">…</div>
<div class="fg p" style="left:323px;top:260px;width:17px">…</div>
<div class="fg p" style="left:342px;top:260px;width:17px">…</div>
<div class="fg p" style="left:361px;top:260px;width:17px">…</div>
<div class="fg p" style="left:400px;top:260px;width:17px">…</div>
<div class="fg p" style="left:419px;top:260px;width:55px">rec…cts</div>
<div class="fg p" style="left:476px;top:260px;width:17px">…</div>
<div class="fg p" style="left:495px;top:260px;width:17px">…</div>
<div class="fg p" style="left:514px;top:260px;width:17px">…</div>
<div class="fg p" style="left:533px;top:260px;width:17px">…</div>
<div class="fg p" style="left:552px;top:260px;width:17px">…</div>
<div class="fg p" style="left:571px;top:260px;width:17px">…</div>
<div class="fg p" style="left:648px;top:260px;width:17px">…</div>
<div class="fg v" style="left:667px;top:260px;width:36px">fa…t</div>
<div class="fg p" style="left:705px;top:260px;width:17px">…</div>
<div class="fg p" style="left:743px;top:260px;width:36px">re…s</div>
<div class="fg p" style="left:781px;top:260px;width:17px">…</div>
<div class="fg p" style="left:800px;top:260px;width:132px">commitRootWhenReady</div>
<div class="fg p" style="left:934px;top:260px;width:17px">…</div>
<div class="fg p" style="left:953px;top:260px;width:17px">…</div>
<div class="fg p" style="left:972px;top:260px;width:17px">…</div>
<div class="fg p" style="left:1010px;top:260px;width:17px">…</div>
<div class="fg v" style="left:0px;top:280px;width:16px">…</div>
<div class="fg p" style="left:18px;top:280px;width:17px">…</div>
<div class="fg p" style="left:37px;top:280px;width:17px">…</div>
<div class="fg p" style="left:75px;top:280px;width:17px">…</div>
<div class="fg p" style="left:304px;top:280px;width:17px">…</div>
<div class="fg p" style="left:323px;top:280px;width:17px">…</div>
<div class="fg p" style="left:94px;top:280px;width:208px">beginWork</div>
<div class="fg p" style="left:342px;top:280px;width:17px">…</div>
<div class="fg p" style="left:361px;top:280px;width:17px">…</div>
<div class="fg p" style="left:400px;top:280px;width:17px">…</div>
<div class="fg p" style="left:419px;top:280px;width:17px">…</div>
<div class="fg p" style="left:476px;top:280px;width:17px">…</div>
<div class="fg p" style="left:495px;top:280px;width:17px">…</div>
<div class="fg p" style="left:514px;top:280px;width:17px">…</div>
<div class="fg p" style="left:533px;top:280px;width:17px">…</div>
<div class="fg p" style="left:552px;top:280px;width:17px">…</div>
<div class="fg p" style="left:571px;top:280px;width:17px">…</div>
<div class="fg p" style="left:648px;top:280px;width:17px">…</div>
<div class="fg v" style="left:667px;top:280px;width:36px">fa…t</div>
<div class="fg p" style="left:705px;top:280px;width:17px">…</div>
<div class="fg p" style="left:743px;top:280px;width:36px">co…r</div>
<div class="fg p" style="left:781px;top:280px;width:17px">…</div>
<div class="fg p" style="left:800px;top:280px;width:132px">commitRootImpl</div>
<div class="fg p" style="left:934px;top:280px;width:17px">…</div>
<div class="fg p" style="left:953px;top:280px;width:17px">…</div>
<div class="fg p" style="left:972px;top:280px;width:17px">…</div>
<div class="fg p" style="left:1010px;top:280px;width:17px">…</div>
<div class="fg v" style="left:0px;top:300px;width:16px">…</div>
<div class="fg p" style="left:18px;top:300px;width:17px">…</div>
<div class="fg p" style="left:37px;top:300px;width:17px">…</div>
<div class="fg p" style="left:75px;top:300px;width:17px">…</div>
<div class="fg p" style="left:304px;top:300px;width:17px">…</div>
<div class="fg p" style="left:323px;top:300px;width:17px">…</div>
<div class="fg p" style="left:94px;top:300px;width:208px">&lt;global&gt;</div>
<div class="fg p" style="left:342px;top:300px;width:17px">…</div>
<div class="fg p" style="left:361px;top:300px;width:17px">…</div>
<div class="fg p" style="left:400px;top:300px;width:17px">…</div>
<div class="fg p" style="left:419px;top:300px;width:17px">…</div>
<div class="fg p" style="left:476px;top:300px;width:17px">…</div>
<div class="fg p" style="left:495px;top:300px;width:17px">…</div>
<div class="fg p" style="left:514px;top:300px;width:17px">…</div>
<div class="fg p" style="left:533px;top:300px;width:17px">…</div>
<div class="fg p" style="left:552px;top:300px;width:17px">…</div>
<div class="fg p" style="left:571px;top:300px;width:17px">…</div>
<div class="fg p" style="left:648px;top:300px;width:17px">…</div>
<div class="fg p" style="left:705px;top:300px;width:17px">…</div>
<div class="fg p" style="left:743px;top:300px;width:36px">re…s</div>
<div class="fg p" style="left:781px;top:300px;width:17px">…</div>
<div class="fg p" style="left:800px;top:300px;width:132px">commitLay…ctOnFiber</div>
<div class="fg p" style="left:934px;top:300px;width:17px">…</div>
<div class="fg p" style="left:953px;top:300px;width:17px">…</div>
<div class="fg p" style="left:972px;top:300px;width:17px">…</div>
<div class="fg p" style="left:1010px;top:300px;width:17px">…</div>
<div class="fg v" style="left:0px;top:320px;width:16px">…</div>
<div class="fg p" style="left:18px;top:320px;width:17px">…</div>
<div class="fg p" style="left:37px;top:320px;width:17px">…</div>
<div class="fg p" style="left:75px;top:320px;width:17px">…</div>
<div class="fg p" style="left:304px;top:320px;width:17px">…</div>
<div class="fg p" style="left:323px;top:320px;width:17px">…</div>
<div class="fg p" style="left:94px;top:320px;width:208px">getEnforcing</div>
<div class="fg p" style="left:400px;top:320px;width:17px">…</div>
<div class="fg p" style="left:419px;top:320px;width:17px">…</div>
<div class="fg p" style="left:476px;top:320px;width:17px">…</div>
<div class="fg p" style="left:495px;top:320px;width:17px">…</div>
<div class="fg p" style="left:514px;top:320px;width:17px">…</div>
<div class="fg p" style="left:533px;top:320px;width:17px">…</div>
<div class="fg p" style="left:552px;top:320px;width:17px">…</div>
<div class="fg p" style="left:571px;top:320px;width:17px">…</div>
<div class="fg p" style="left:648px;top:320px;width:17px">…</div>
<div class="fg p" style="left:705px;top:320px;width:17px">…</div>
<div class="fg p" style="left:743px;top:320px;width:36px">co…r</div>
<div class="fg p" style="left:781px;top:320px;width:17px">…</div>
<div class="fg p" style="left:800px;top:320px;width:132px">recursive…utEffects</div>
<div class="fg p" style="left:934px;top:320px;width:17px">…</div>
<div class="fg p" style="left:953px;top:320px;width:17px">…</div>
<div class="fg p" style="left:972px;top:320px;width:17px">…</div>
<div class="fg p" style="left:1010px;top:320px;width:17px">…</div>
<div class="fg v" style="left:0px;top:340px;width:16px">…</div>
<div class="fg p" style="left:18px;top:340px;width:17px">…</div>
<div class="fg p" style="left:37px;top:340px;width:17px">…</div>
<div class="fg p" style="left:75px;top:340px;width:17px">…</div>
<div class="fg p" style="left:304px;top:340px;width:17px">…</div>
<div class="fg p" style="left:323px;top:340px;width:17px">…</div>
<div class="fg p" style="left:94px;top:340px;width:208px">&lt;global&gt;</div>
<div class="fg p" style="left:400px;top:340px;width:17px">…</div>
<div class="fg p" style="left:419px;top:340px;width:17px">…</div>
<div class="fg p" style="left:476px;top:340px;width:17px">…</div>
<div class="fg p" style="left:495px;top:340px;width:17px">…</div>
<div class="fg p" style="left:514px;top:340px;width:17px">…</div>
<div class="fg p" style="left:533px;top:340px;width:17px">…</div>
<div class="fg p" style="left:552px;top:340px;width:17px">…</div>
<div class="fg p" style="left:648px;top:340px;width:17px">…</div>
<div class="fg p" style="left:705px;top:340px;width:17px">…</div>
<div class="fg p" style="left:743px;top:340px;width:36px">re…s</div>
<div class="fg p" style="left:781px;top:340px;width:17px">…</div>
<div class="fg p" style="left:800px;top:340px;width:132px">commitLay…ctOnFiber</div>
<div class="fg p" style="left:953px;top:340px;width:17px">…</div>
<div class="fg p" style="left:972px;top:340px;width:17px">…</div>
<div class="fg p" style="left:1010px;top:340px;width:17px">…</div>
<div class="fg v" style="left:0px;top:360px;width:16px">…</div>
<div class="fg p" style="left:18px;top:360px;width:17px">…</div>
<div class="fg p" style="left:37px;top:360px;width:17px">…</div>
<div class="fg p" style="left:75px;top:360px;width:17px">…</div>
<div class="fg p" style="left:304px;top:360px;width:17px">…</div>
<div class="fg p" style="left:323px;top:360px;width:17px">…</div>
<div class="fg p" style="left:94px;top:360px;width:208px">loadModuleImplementation</div>
<div class="fg p" style="left:400px;top:360px;width:17px">…</div>
<div class="fg p" style="left:419px;top:360px;width:17px">…</div>
<div class="fg p" style="left:476px;top:360px;width:17px">…</div>
<div class="fg p" style="left:495px;top:360px;width:17px">…</div>
<div class="fg p" style="left:514px;top:360px;width:17px">…</div>
<div class="fg p" style="left:533px;top:360px;width:17px">…</div>
<div class="fg p" style="left:552px;top:360px;width:17px">…</div>
<div class="fg p" style="left:648px;top:360px;width:17px">…</div>
<div class="fg p" style="left:705px;top:360px;width:17px">…</div>
<div class="fg p" style="left:743px;top:360px;width:17px">…</div>
<div class="fg p" style="left:762px;top:360px;width:17px">…</div>
<div class="fg p" style="left:781px;top:360px;width:17px">…</div>
<div class="fg p" style="left:800px;top:360px;width:132px">recursive…utEffects</div>
<div class="fg p" style="left:953px;top:360px;width:17px">…</div>
<div class="fg p" style="left:972px;top:360px;width:17px">…</div>
<div class="fg p" style="left:1010px;top:360px;width:17px">…</div>
<div class="a" style="left:94px;top:100px;width:208px;height:18px;border:3px solid #2562D4"></div>
</div>
<div class="a" style="left:1144px;top:316px;width:40px;height:40px;border-radius:50%;background:#fff;border:1px solid #E0DCE5;box-shadow:0 2px 6px rgba(0,0,0,0.08)"></div>
<svg class="a" style="left:1156px;top:328px" width="16" height="16" viewBox="0 0 16 16"><g fill="none" stroke="#3E3446" stroke-width="1.3" stroke-linejoin="round"><path d="M1.4 3.4 H6.9 L9.3 1.6 H11.6 V10.8 H9.3 L6.9 8.5 H1.4 Z"/><path d="M2.3 8.5 V14.6 H5.7 V8.5"/><path d="M11.6 3.5 A2.9 2.8 0 0 1 11.6 9.1"/></g></svg>
<div class="a" style="left:73px;top:645px;width:1127px;height:51px;background:#F6F6F9;border-top:1px solid #E0DCE5"></div>
<div class="t" style="left:103px;top:666px;font-size:14.5px;color:#80708F">Privacy Policy</div>
<div class="t" style="left:210px;top:666px;font-size:14.5px;color:#80708F">Terms of Use</div>
<div class="t" style="left:902px;top:666px;font-size:14.5px;color:#80708F">Service Status</div>
<div class="t" style="left:1013px;top:666px;font-size:14.5px;color:#80708F">API</div>
<div class="t" style="left:1052px;top:666px;font-size:14.5px;color:#80708F">Docs</div>
<div class="t" style="left:1100px;top:666px;font-size:14.5px;color:#80708F">Contribute</div>
<svg class="a" style="left:624px;top:663.5px" width="24.4" height="21.5" viewBox="0 0 50 44">
<defs><linearGradient id="rb" x1="0.15" y1="0.1" x2="0.95" y2="0.75"><stop offset="0" stop-color="#F06BA8"/><stop offset="0.18" stop-color="#EC5A8E"/><stop offset="0.3" stop-color="#E8412E"/><stop offset="0.42" stop-color="#F29A26"/><stop offset="0.52" stop-color="#F2D21C"/><stop offset="0.62" stop-color="#2E9B48"/><stop offset="0.75" stop-color="#2EB2BE"/><stop offset="0.88" stop-color="#3A2A8E"/><stop offset="1" stop-color="#6A2B9B"/></linearGradient></defs>
<path fill="url(#rb)" d="M29,2.26a4.67,4.67,0,0,0-8,0L14.42,13.53A32.21,32.21,0,0,1,32.17,40.19H27.550A27.68,27.68,0,0,0,12.09,17.47L6,28a15.92,15.920,0,0,1,9.23,12.17H4.62A.76.76,0,0,1,4,39.06l2.94-5a10.74,10.74,0,0,0-3.36-1.9l-2.91,5a4.54,4.54,0,0,0,1.69,6.24A4.66,4.66,0,0,0,4.62,44H19.15a19.4,19.4,0,0,0-8-17.310l2.31-4A23.87,23.87,0,0,1,23.76,44H36.07a35.88,35.88,0,0,0-16.41-31.8l4.67-8a.77.77,0,0,1,1.05-.27c.53.29,20.29,34.77,20.66,35.17a.76.76,0,0,1-.68,1.13H40.6q.09,1.91,0,3.810h4.78A4.59,4.59,0,0,0,50,39.43a4.490,4.490,0,0,0-.62-2.28Z"/></svg>
</div></body></html>
